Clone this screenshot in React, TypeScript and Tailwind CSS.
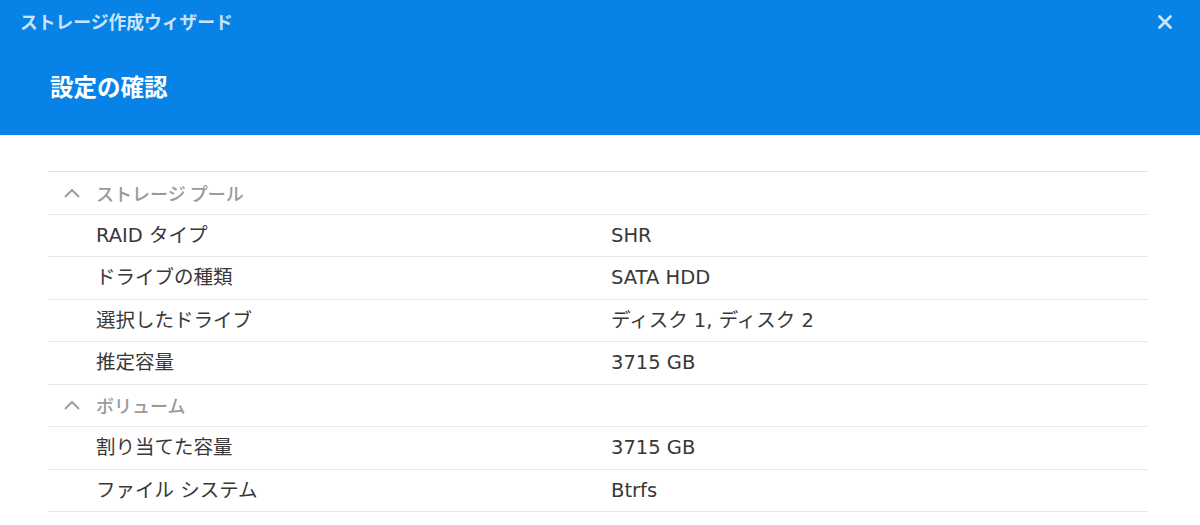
import React from "react";

const jp = { fontFamily: '"Noto Sans CJK JP", sans-serif' };
const mixed = { fontFamily: '"DejaVu Sans", "Noto Sans CJK JP", sans-serif' };

type Row = { label: string; value: string };
type Section = { title: string; rows: Row[] };

const sections: Section[] = [
  {
    title: "ストレージ プール",
    rows: [
      { label: "RAID タイプ", value: "SHR" },
      { label: "ドライブの種類", value: "SATA HDD" },
      { label: "選択したドライブ", value: "ディスク 1, ディスク 2" },
      { label: "推定容量", value: "3715 GB" },
    ],
  },
  {
    title: "ボリューム",
    rows: [
      { label: "割り当てた容量", value: "3715 GB" },
      { label: "ファイル システム", value: "Btrfs" },
    ],
  },
];

function Caret() {
  return (
    <svg width="16" height="10" viewBox="0 0 16 10" className="shrink-0">
      <polyline
        points="1.5,8.5 8,2 14.5,8.5"
        fill="none"
        stroke="#9a9a9a"
        strokeWidth="1.8"
        strokeLinecap="round"
        strokeLinejoin="round"
      />
    </svg>
  );
}

function CloseIcon() {
  return (
    <svg width="16" height="16" viewBox="0 0 16 16">
      <path
        d="M2.5 2.5 L13.5 13.5 M13.5 2.5 L2.5 13.5"
        stroke="#cfe5fb"
        strokeWidth="2.8"
        strokeLinecap="round"
      />
    </svg>
  );
}

export default function App() {
  return (
    <div className="w-[1200px] h-[525px] bg-white overflow-hidden">
      <header className="h-[135px] bg-[#0783e8] flex flex-col">
        <div className="h-[44px] flex items-center justify-between pl-[20px] pr-[27px]">
          <span className="text-[17.75px] font-bold text-[#c9e3fb] leading-none" style={jp}>
            ストレージ作成ウィザード
          </span>
          <CloseIcon />
        </div>
        <div className="flex-1 flex items-center pl-[50px] pb-[5px]">
          <h1 className="text-[23.5px] font-bold text-white leading-none" style={jp}>
            設定の確認
          </h1>
        </div>
      </header>

      <div className="pt-[36px] px-[48px]">
        <div className="w-[1100px] border-t border-[#e3e3e3]">
          {sections.map((s) => (
            <div key={s.title}>
              <div className="h-[42.5px] flex items-center border-b border-[#ececec] pl-[16px] gap-[16px]">
                <Caret />
                <span className="text-[18px] font-medium text-[#9a9a9a] leading-none" style={jp}>
                  {s.title}
                </span>
              </div>
              {s.rows.map((r) => (
                <div
                  key={r.label}
                  className="h-[42.5px] flex items-center border-b border-[#e6e6e6] pl-[48px] text-[19.5px] text-[#383838] leading-none"
                  style={mixed}
                >
                  <span className="w-[515px] shrink-0">{r.label}</span>
                  <span>{r.value}</span>
                </div>
              ))}
            </div>
          ))}
        </div>
      </div>
    </div>
  );
}
